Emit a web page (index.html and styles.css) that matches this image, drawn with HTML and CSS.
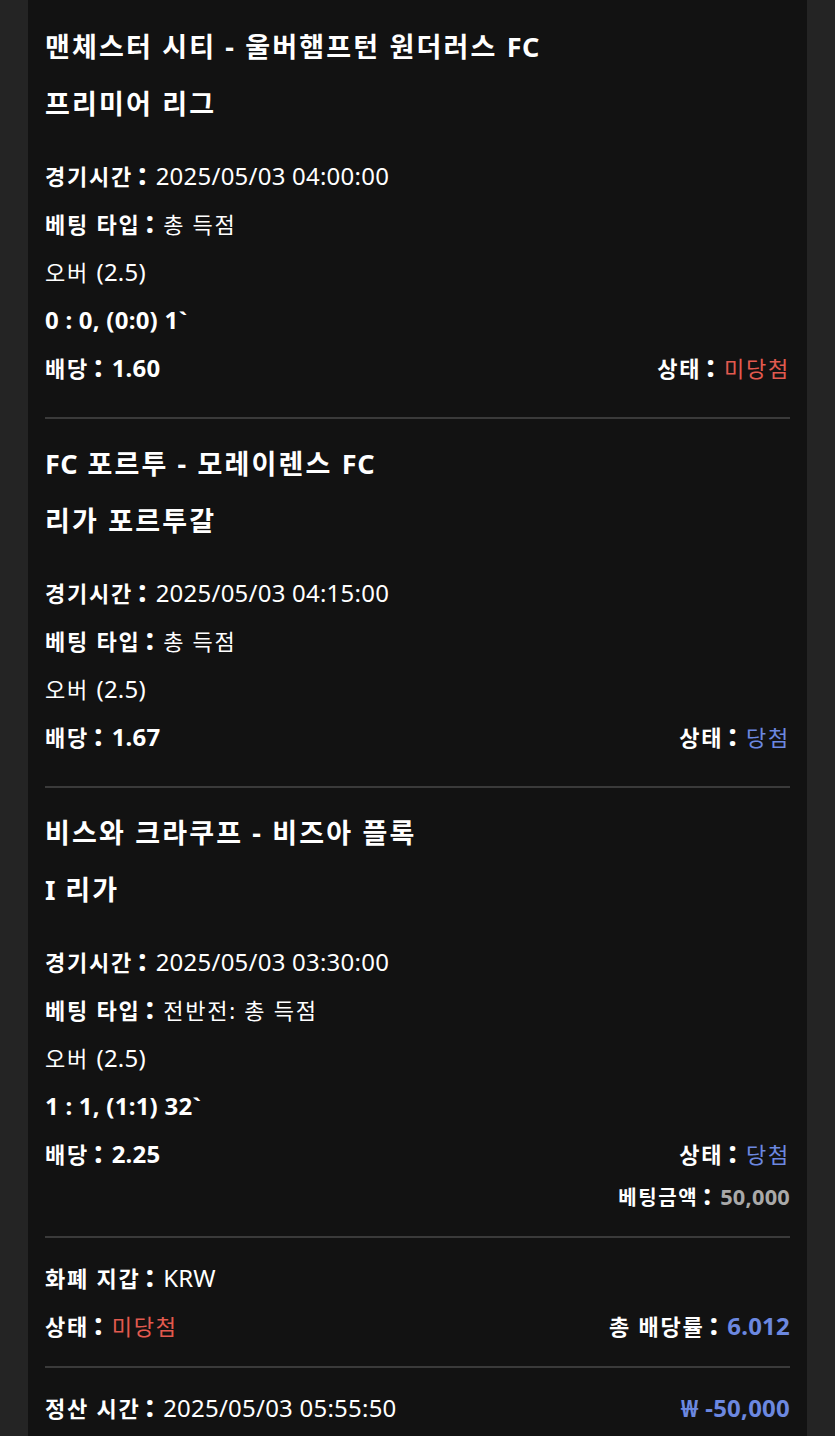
FILE: index.html
```html
<!DOCTYPE html>
<html lang="ko">
<head>
<meta charset="utf-8">
<link rel="stylesheet" href="styles.css">
</head>
<body>
<div class="page">
  <div class="panel">
    <section class="bet">
      <div class="title">
        <div>맨체스터 시티 - 울버햄프턴 원더러스 <span class="n">FC</span></div>
        <div>프리미어 리그</div>
      </div>
      <div class="rows">
        <div class="row"><span class="lbl">경기시간<span class="c">:</span></span><span class="n">2025/05/03 04:00:00</span></div>
        <div class="row"><span class="lbl">베팅 타입<span class="c">:</span></span><span>총 득점</span></div>
        <div class="row"><span>오버 <span class="n">(2.5)</span></span></div>
        <div class="row"><span class="lbl n">0 : 0, (0:0) 1`</span></div>
        <div class="row split"><span><span class="lbl">배당<span class="c">:</span></span><span class="lbl n">1.60</span></span><span><span class="lbl">상태<span class="c">:</span></span><span class="red">미당첨</span></span></div>
      </div>
    </section>
    <hr class="divider">
    <section class="bet">
      <div class="title">
        <div><span class="n">FC</span> 포르투 - 모레이렌스 <span class="n">FC</span></div>
        <div>리가 포르투갈</div>
      </div>
      <div class="rows">
        <div class="row"><span class="lbl">경기시간<span class="c">:</span></span><span class="n">2025/05/03 04:15:00</span></div>
        <div class="row"><span class="lbl">베팅 타입<span class="c">:</span></span><span>총 득점</span></div>
        <div class="row"><span>오버 <span class="n">(2.5)</span></span></div>
        <div class="row split"><span><span class="lbl">배당<span class="c">:</span></span><span class="lbl n">1.67</span></span><span><span class="lbl">상태<span class="c">:</span></span><span class="blue">당첨</span></span></div>
      </div>
    </section>
    <hr class="divider">
    <section class="bet last">
      <div class="title">
        <div>비스와 크라쿠프 - 비즈아 플록</div>
        <div><span class="n">I</span> 리가</div>
      </div>
      <div class="rows">
        <div class="row"><span class="lbl">경기시간<span class="c">:</span></span><span class="n">2025/05/03 03:30:00</span></div>
        <div class="row"><span class="lbl">베팅 타입<span class="c">:</span></span><span>전반전: 총 득점</span></div>
        <div class="row"><span>오버 <span class="n">(2.5)</span></span></div>
        <div class="row"><span class="lbl n">1 : 1, (1:1) 32`</span></div>
        <div class="row split"><span><span class="lbl">배당<span class="c">:</span></span><span class="lbl n">2.25</span></span><span><span class="lbl">상태<span class="c">:</span></span><span class="blue">당첨</span></span></div>
        <div class="row small end"><span class="lbl">베팅금액<span class="c">:</span></span><span class="lbl grey n">50,000</span></div>
      </div>
    </section>
    <hr class="divider">
    <section class="summary">
      <div class="row"><span class="lbl">화폐 지갑<span class="c">:</span></span><span class="n">KRW</span></div>
      <div class="row split"><span><span class="lbl">상태<span class="c">:</span></span><span class="red">미당첨</span></span><span><span class="lbl">총 배당률<span class="c">:</span></span><span class="lbl blue n">6.012</span></span></div>
    </section>
    <hr class="divider">
    <section class="summary">
      <div class="row split"><span><span class="lbl">정산 시간<span class="c">:</span></span><span class="n">2025/05/03 05:55:50</span></span><span><span class="lbl blue n">₩ -50,000</span></span></div>
    </section>
  </div>
</div>
</body>
</html>
```

FILE: styles.css
```css
html, body {
  margin: 0;
  padding: 0;
  background: #242424;
}
body {
  font-family: "Noto Sans", "Noto Sans CJK KR", sans-serif;
  color: #ffffff;
}
.page {
  padding-left: 28px;
  padding-right: 28px;
  height: 1436px;
  overflow: hidden;
}
.panel {
  background: #121212;
  padding: 18px 17px 0 17px;
  min-height: 1436px;
  box-sizing: border-box;
}
.title {
  font-size: 27px;
  font-weight: 700;
  line-height: 57px;
  letter-spacing: 0.08em;
  white-space: nowrap;
}
.rows {
  margin-top: 20px;
  padding-bottom: 25px;
}
.bet.last .rows {
  padding-bottom: 17px;
}
.row {
  font-size: 22px;
  line-height: 48px;
  letter-spacing: 0.08em;
  white-space: pre;
}
.n {
  letter-spacing: 0.01em;
  font-size: 1.09em;
  line-height: 1;
}
.title .n {
  font-size: 1em;
  letter-spacing: 0.02em;
}
.row.split {
  display: flex;
  justify-content: space-between;
}
.row.small {
  font-size: 20px;
  line-height: 42px;
  margin-top: -1px;
}
.row.end {
  text-align: right;
}
.lbl {
  font-weight: 700;
}
.c {
  font-size: 1.4em;
  line-height: 0;
  font-weight: 700;
  letter-spacing: 0;
  margin: 0 9px 0 5px;
}
.red {
  color: #e25a4f;
}
.blue {
  color: #6c88e0;
}
.grey {
  color: #a9a9a9;
}
.divider {
  border: 0;
  height: 2px;
  background: #3a3a3a;
  margin: 0;
}
.divider + .bet .title {
  margin-top: 16px;
}
.summary {
  padding: 16px 0 16px;
}
```
